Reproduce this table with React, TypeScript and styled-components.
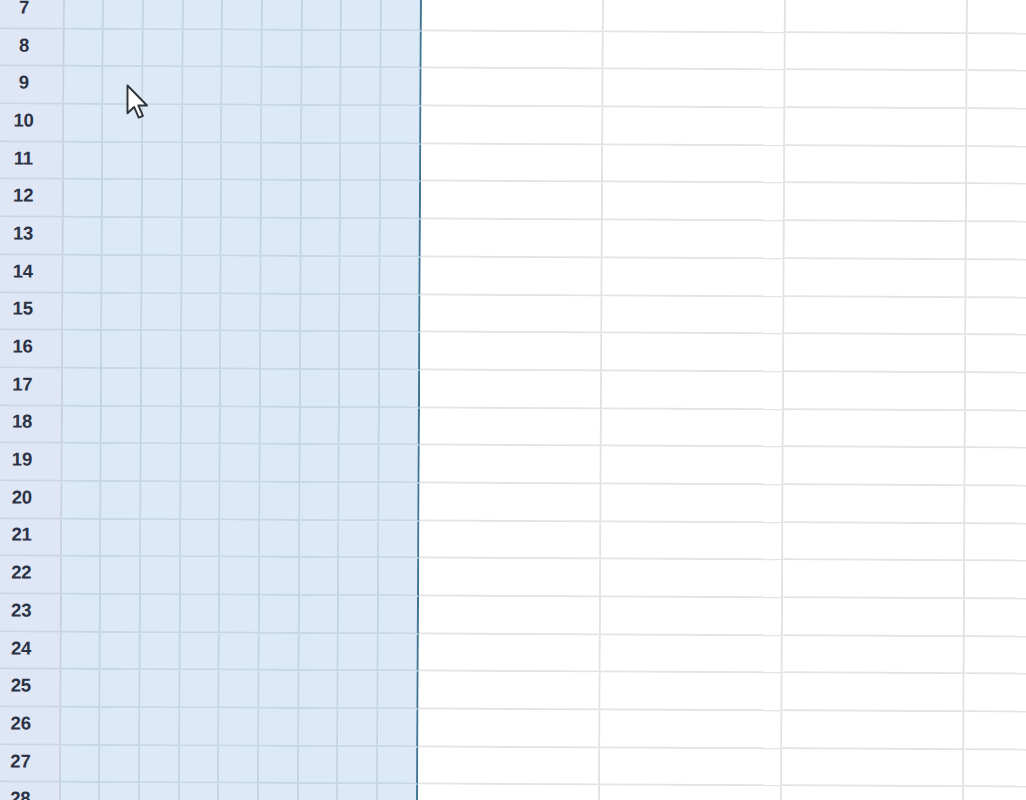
import React from "react";
import styled, { createGlobalStyle } from "styled-components";

const Global = createGlobalStyle`
  html, body { margin: 0; padding: 0; background: #ffffff; overflow: hidden; }
  body { font-family: "Liberation Sans", Arial, sans-serif; }
`;

const Screen = styled.div`
  position: relative;
  width: 1026px;
  height: 800px;
  overflow: hidden;
  background: #ffffff;
`;

const Sheet = styled.div`
  display: grid;
  grid-template-columns: 66.5px repeat(9, 39.7px) repeat(5, 182px);
  grid-auto-rows: 37.7px;
  margin-top: -6.2px;
  margin-left: -4px;
  width: max-content;
  transform: rotate(0.28deg);
  transform-origin: 517px 406px;
`;

const RowHead = styled.div`
  box-sizing: border-box;
  display: flex;
  align-items: center;
  justify-content: center;
  padding: 0 16px 4px 4px;
  background: #dfe6f6;
  border-right: 2px solid #c6d1e3;
  border-bottom: 2px solid #ccd5e6;
  color: #2b3345;
  font-family: "Liberation Sans", Arial, sans-serif;
  font-weight: 700;
  font-size: 18.5px;
  letter-spacing: -0.2px;
`;

const Cell = styled.div<{ $selected?: boolean; $edge?: boolean }>`
  box-sizing: border-box;
  background: ${(p) => (p.$selected ? "#dceaf7" : "#ffffff")};
  border-bottom: 2px solid ${(p) => (p.$selected ? "#c6d8e6" : "#e4e4e4")};
  border-right: 2px solid
    ${(p) => (p.$edge ? "#3f7593" : p.$selected ? "#c3d5e3" : "#e2e2e2")};
`;

const Cursor = styled.svg`
  position: absolute;
  left: 125.5px;
  top: 83.5px;
  width: 24px;
  height: 36px;
  filter: blur(0.4px);
`;

const rows = Array.from({ length: 22 }, (_, i) => i + 7);
const NARROW = 9;
const WIDE = 5;

export default function App() {
  return (
    <>
      <Global />
      <Screen>
        <Sheet>
          {rows.map((r) => (
            <React.Fragment key={r}>
              <RowHead>{r}</RowHead>
              {Array.from({ length: NARROW }, (_, c) => (
                <Cell key={`n${c}`} $selected $edge={c === NARROW - 1} />
              ))}
              {Array.from({ length: WIDE }, (_, c) => (
                <Cell key={`w${c}`} />
              ))}
            </React.Fragment>
          ))}
        </Sheet>
        <Cursor viewBox="0 0 16 24">
          <path
            d="M1 1 V19.5 L5.4 15.3 L8.5 22.4 L11.3 21.2 L8.2 14.3 H14 Z"
            fill="#ffffff"
            stroke="#2f3338"
            strokeWidth="1.3"
            strokeLinejoin="round"
          />
        </Cursor>
      </Screen>
    </>
  );
}
